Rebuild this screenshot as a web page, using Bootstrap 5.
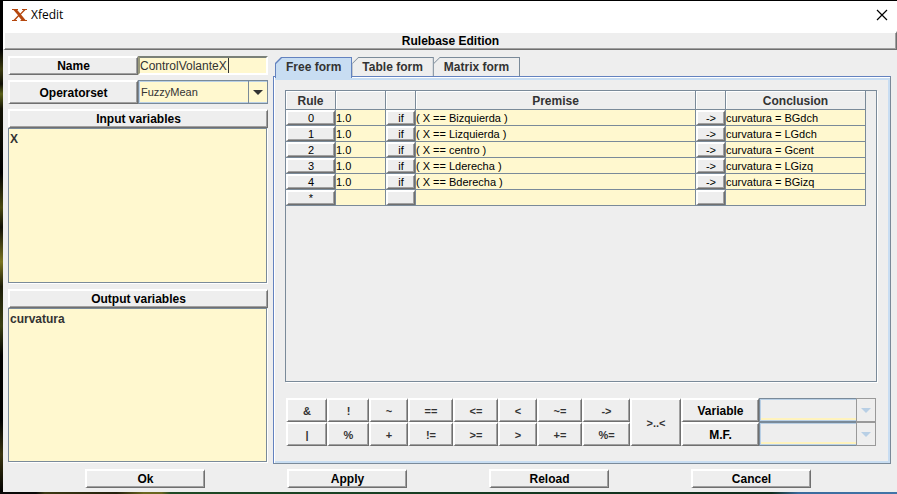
<!DOCTYPE html>
<html lang="en">
<head>
<meta charset="utf-8">
<meta name="viewport" content="width=device-width, initial-scale=1">
<title>Xfedit</title>
<link href="https://cdn.jsdelivr.net/npm/bootstrap@5.3.0/dist/css/bootstrap.min.css" rel="stylesheet">
<style>
:root { --panel: #eeeeee; --cream: #fff8cf; --line: #7a8a99; --blue: #6382bf; --pale: #c8ddf2; }
body { font-family: "Liberation Sans", Arial, sans-serif; font-size: 12px; line-height: 14px; color: #000; }
.desktop { padding: 1px 0 2px 3px; background-color: #000;
  background-image: linear-gradient(90deg, #0a0a08 0%, #0a0a08 4%, #3c3a14 5%, #24200c 13%, #6a6620 16%, #6a6620 18%, #1f4a25 19%, #163c22 50%, #0f2c1c 86%, #3a6a9c 89%, #4275a8 100%), linear-gradient(180deg, #000 0%, #000 10%, #3c3c10 14%, #101006 17%, #5a6018 19%, #141406 22%, #000 35%, #4a4a10 42%, #101006 46%, #7a7420 53%, #1c1c08 58%, #3a4012 66%, #000 72%, #000 85%, #3a3510 92%, #000 100%);
  background-size: 100% 2px, 3px 100%; background-position: left bottom, left top; background-repeat: no-repeat; }
.win { background: var(--panel); }
.titlebar { height: 30px; font-family: "Open Sans", sans-serif; padding: 0 9px 2px; flex: none; }
.closer { background: none; border: 0; padding: 0; line-height: 0; }
.raised { background: var(--panel); border: 2px solid #fff; border-right: 1px solid #6f6f6f; border-bottom: 1px solid #6f6f6f; box-shadow: inset -1px -1px 0 #a0a0a0;
  border-radius: 0; padding: 0; font-weight: bold; font-size: 12px; line-height: 14px; color: #000; text-align: center; }
.bar { height: 19px; flex: none; display: block; padding-top: 1px; }
.content { padding: 6px 6px 0 5px; gap: 5px; }
.side { flex: 0 0 260px; }
.field { height: 19px; margin-bottom: 5px; }
.field.tall { height: 24px; }
.field > label { flex: 0 0 50%; height: 100%; padding-top: 1px; }
.field.tall > label { padding-top: 4px; }
.name-box { display: block; background: var(--cream); border: 2px solid; border-color: #7a8078 #fff #fff #99997a; border-radius: 0; padding: 0; width: 100%; height: 100%; font-size: 12px; line-height: 15px; color: #333; outline: 0; }
.caret { top: 2px; left: 90px; width: 1px; height: 15px; background: #333; }
.combo { display: block; appearance: none; background: var(--cream); border: 1px solid var(--line); box-shadow: inset 1px 1px 0 #b8cfe5, inset 0 -1px 0 #b8cfe5; border-radius: 0; width: 100%; height: 100%; padding: 0 20px 0 2px; font-size: 11px; color: #333; opacity: 1; }
.combo-arrow { top: 0; right: 0; bottom: 0; width: 20px; border: 1px solid var(--line); pointer-events: none; }
.combo:disabled { background: var(--panel); box-shadow: inset 1px 1px 0 #b8cfe5, inset 0 -1px 0 #b8cfe5, inset 0 -3px 0 #fff3bd; }
.off .combo-arrow { border-color: #999; background: var(--panel); }
.varlist { background: var(--cream); border: 1px solid var(--line); box-shadow: 1px 1px 0 #fff; font-weight: bold; color: #333; padding: 3px 1px; margin: 0 1px 6px 0; list-style: none; flex: 1 1 0; }
.varlist.last { margin-bottom: 2px; }
.tabs { padding: 1px 0 0 2px; position: relative; z-index: 1; }
.tab-btn { background: var(--line); border: 0; padding: 1px 1px 0 0; height: 19px; font-weight: bold; font-size: 12px; line-height: 14px; color: #333; clip-path: polygon(6px 0, 100% 0, 100% 100%, 0 100%, 0 6px); }
.tab-btn span { display: block; height: 100%; background: var(--panel); padding: 2px 10px 0 10px; clip-path: polygon(6px 0, 100% 0, 100% 100%, 0 100%, 0 6px); }
.tab-btn.on { background: var(--blue); height: 21px; margin-bottom: -2px; padding-left: 1px; }
.tab-btn.on span { background: var(--pale); }
.pane { border: 1px solid var(--line); border-top-color: var(--blue); border-left-color: var(--blue); box-shadow: inset 1px 1px 0 #fff, inset -2px -2px 0 var(--pale), inset 0 3px 0 var(--pale); padding: 13px 13px 17px 11px; }
.scroller { border: 1px solid var(--line); box-shadow: 1px 1px 0 #fff; padding-right: 10px; flex: 1 1 0; }
.rules { width: 100%; table-layout: fixed; border-collapse: separate; border-spacing: 0; font-size: 11px; line-height: 14px; color: #000; }
.rules th { height: 19px; text-align: center; font-size: 12px; color: #333; padding: 1px 0 0; border-right: 1px solid var(--line); border-bottom: 1px solid var(--line); box-shadow: inset 1px 1px 0 #fff; }
.rules td { height: 16px; padding: 1px 0 0; background: var(--cream); border-right: 1px solid var(--line); border-bottom: 1px solid var(--line); white-space: nowrap; }
.rules td.key { padding: 0; }
.rules td .raised { display: block; width: 100%; height: 15px; font-weight: normal; font-size: 11px; line-height: 12px; }
.keypad { display: grid; grid-template-columns: 41fr 42fr 39fr 45fr 45fr 39fr 45fr 48fr 51fr 78fr 117fr; grid-template-rows: 24px 24px; margin: 16px 1px 0; }
.keypad .raised { font-size: 11px; color: #333; min-width: 0; padding-top: 1px; }
.keypad .raised.tag { font-size: 12px; color: #000; display: flex; align-items: center; justify-content: center; }
.span2 { grid-row: 1 / 3; grid-column: 9; }
.actions { padding: 5px 4px 4px 0; }
.actions .raised { width: 120px; height: 19px; }
</style>
<script src="https://cdn.jsdelivr.net/npm/bootstrap@5.3.0/dist/js/bootstrap.bundle.min.js"></script>
</head>
<body>
<div class="desktop vh-100 d-flex">
<main class="win flex-fill d-flex flex-column">
  <header class="titlebar bg-white d-flex align-items-center">
    <svg width="15" height="12" viewBox="0 0 15 12" aria-hidden="true"><path d="M0 0h6v1H5.2L8.300 4.600 11.500 1H10V0h5v1h-1.500L9 5.500 13.500 11H15v1H8.500v-1h1L6.700 7.500 3.500 11H5v1H0v-1h1.500L6 6.300 1.500 1H0z" fill="#b5470e"/></svg>
    <span class="ms-1">Xfedit</span>
    <button class="closer ms-auto" aria-label="Close"><svg width="12" height="12" viewBox="0 0 12 12"><path d="M1 1l10 10M11 1L1 11" stroke="#000" stroke-width="1.2"/></svg></button>
  </header>
  <h1 class="raised bar m-0">Rulebase Edition</h1>
  <div class="content d-flex flex-fill">
    <section class="side d-flex flex-column">
      <div class="field d-flex"><label class="raised" for="nm">Name</label>
        <div class="position-relative flex-fill"><input id="nm" class="name-box" value="ControlVolanteX"><span class="caret position-absolute"></span></div></div>
      <div class="field tall d-flex"><label class="raised" for="op">Operatorset</label>
        <div class="position-relative flex-fill"><select id="op" class="combo"><option>FuzzyMean</option></select><span class="combo-arrow position-absolute d-flex align-items-center justify-content-center"><svg width="10" height="5" viewBox="0 0 10 5"><path d="M0 0h10L5 5z" fill="#333"/></svg></span></div></div>
      <h2 class="raised bar m-0">Input variables</h2>
      <ul class="varlist"><li>X</li></ul>
      <h2 class="raised bar m-0">Output variables</h2>
      <ul class="varlist last"><li>curvatura</li></ul>
    </section>
    <section class="flex-fill d-flex flex-column">
      <div class="tabs d-flex" role="tablist">
        <button class="tab-btn on" role="tab" aria-selected="true"><span>Free form</span></button>
        <button class="tab-btn" role="tab"><span>Table form</span></button>
        <button class="tab-btn" role="tab"><span>Matrix form</span></button>
      </div>
      <div class="pane flex-fill d-flex flex-column">
        <div class="scroller">
          <table class="rules">
            <colgroup><col style="width:8.62%"><col style="width:8.62%"><col style="width:5.17%"><col><col style="width:5.17%"><col style="width:24.14%"></colgroup>
            <thead><tr><th>Rule</th><th></th><th></th><th>Premise</th><th></th><th>Conclusion</th></tr></thead>
            <tbody>
            <tr><td class="key"><button class="raised">0</button></td><td>1.0</td><td class="key"><button class="raised">if</button></td><td>( X == Bizquierda )</td><td class="key"><button class="raised">-&gt;</button></td><td>curvatura = BGdch</td></tr>
            <tr><td class="key"><button class="raised">1</button></td><td>1.0</td><td class="key"><button class="raised">if</button></td><td>( X == Lizquierda )</td><td class="key"><button class="raised">-&gt;</button></td><td>curvatura = LGdch</td></tr>
            <tr><td class="key"><button class="raised">2</button></td><td>1.0</td><td class="key"><button class="raised">if</button></td><td>( X == centro )</td><td class="key"><button class="raised">-&gt;</button></td><td>curvatura = Gcent</td></tr>
            <tr><td class="key"><button class="raised">3</button></td><td>1.0</td><td class="key"><button class="raised">if</button></td><td>( X == Lderecha )</td><td class="key"><button class="raised">-&gt;</button></td><td>curvatura = LGizq</td></tr>
            <tr><td class="key"><button class="raised">4</button></td><td>1.0</td><td class="key"><button class="raised">if</button></td><td>( X == Bderecha )</td><td class="key"><button class="raised">-&gt;</button></td><td>curvatura = BGizq</td></tr>
            <tr><td class="key"><button class="raised">*</button></td><td></td><td class="key"><button class="raised" aria-label="if"></button></td><td></td><td class="key"><button class="raised" aria-label="then"></button></td><td></td></tr>
            </tbody>
          </table>
        </div>
        <div class="keypad">
          <button class="raised">&amp;</button><button class="raised">!</button><button class="raised">~</button><button class="raised">==</button><button class="raised">&lt;=</button><button class="raised">&lt;</button><button class="raised">~=</button><button class="raised">-&gt;</button>
          <button class="raised span2">&gt;..&lt;</button>
          <label class="raised tag" for="va">Variable</label>
          <div class="position-relative off"><select id="va" class="combo" disabled></select><span class="combo-arrow position-absolute d-flex align-items-center justify-content-center"><svg width="10" height="5" viewBox="0 0 10 5"><path d="M0 0h10L5 5z" fill="#b8cfe5"/></svg></span></div>
          <button class="raised">|</button><button class="raised">%</button><button class="raised">+</button><button class="raised">!=</button><button class="raised">&gt;=</button><button class="raised">&gt;</button><button class="raised">+=</button><button class="raised">%=</button>
          <label class="raised tag" for="mf">M.F.</label>
          <div class="position-relative off"><select id="mf" class="combo" disabled></select><span class="combo-arrow position-absolute d-flex align-items-center justify-content-center"><svg width="10" height="5" viewBox="0 0 10 5"><path d="M0 0h10L5 5z" fill="#b8cfe5"/></svg></span></div>
        </div>
      </div>
    </section>
  </div>
  <footer class="actions d-flex justify-content-evenly">
    <button class="raised">Ok</button><button class="raised">Apply</button><button class="raised">Reload</button><button class="raised">Cancel</button>
  </footer>
</main>
</div>
</body>
</html>
